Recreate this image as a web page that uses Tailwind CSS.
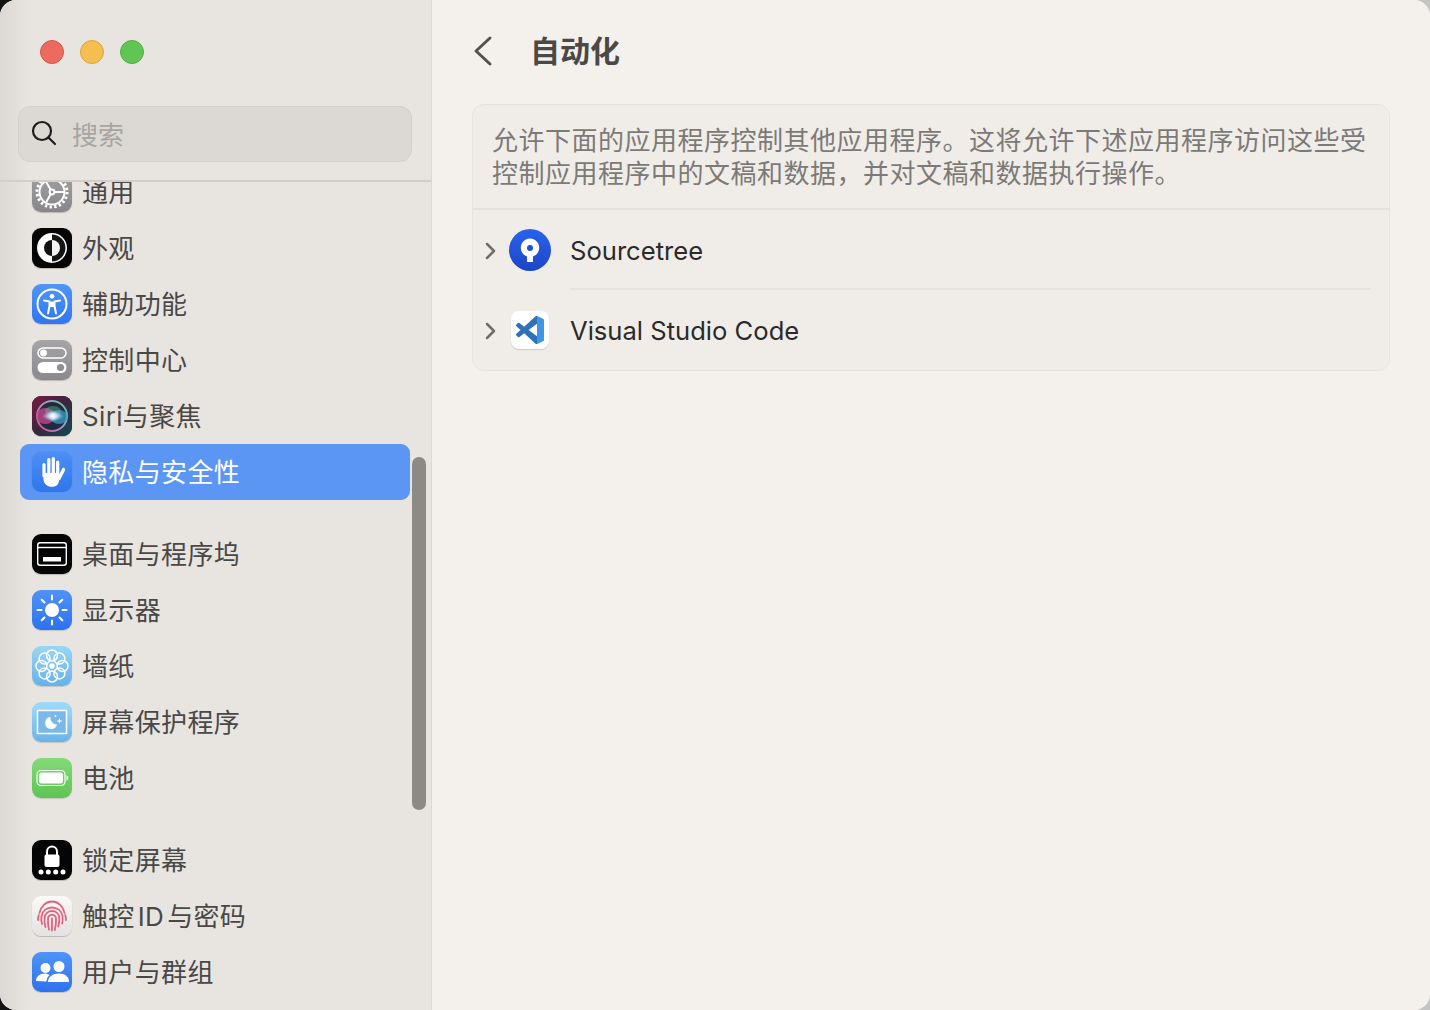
<!DOCTYPE html>
<html lang="zh-CN">
<head>
    <meta charset="UTF-8">
    <meta name="viewport" content="width=device-width, initial-scale=1.0">
    <title>自动化</title>
    <script src="https://cdn.jsdelivr.net/npm/@tailwindcss/browser@4"></script>
</head>
<body class="bg-linear-to-r from-[#141414] from-50% to-[#c4c4c4] to-50% font-['Inter','Noto_Sans_CJK_SC',sans-serif] overflow-hidden">
    <div class="w-[1430px] h-[1010px] flex rounded-[16px] overflow-hidden bg-[#f4f1ed]">

        <!-- sidebar -->
        <aside class="w-[432px] h-full shrink-0 flex flex-col bg-linear-to-r from-[#dcd9d5] via-[#e8e5e1] via-[7%] to-[#e8e5e1] border-r border-[#dcd9d5] relative">
            <div class="h-[182px] shrink-0 flex flex-col border-b-2 border-[#d2cfcb] relative z-10">
                <div class="flex gap-4 pl-10 pt-10">
                    <span class="w-6 h-6 rounded-full bg-[#ec6a5e] border border-[#d5574c]"></span>
                    <span class="w-6 h-6 rounded-full bg-[#f4bf4f] border border-[#dca53c]"></span>
                    <span class="w-6 h-6 rounded-full bg-[#61c554] border border-[#4eae43]"></span>
                </div>
                <div class="ml-[18px] mt-[42px] w-[394px] h-[56px] rounded-[12px] bg-[#dcd9d5] border border-[#d3d0cc] flex items-center pl-[11px] gap-[14px]">
                    <svg class="w-7 h-7 -mt-[2px]" viewBox="0 0 28 28" fill="none" stroke="#1e1e1e" stroke-width="2.2" stroke-linecap="round"><circle cx="12" cy="12" r="9"/><path d="M18.5 18.5 25 25"/></svg>
                    <span class="pt-1 text-[26px] leading-none text-[#a8a5a1]">搜索</span>
                </div>
            </div>

            <div class="flex-1 overflow-hidden">
                <ul class="-mt-[18px] pl-5 text-[26px] text-[#4a4846] leading-none tracking-[0.35px]">
                    <li class="h-14 flex items-center pl-3 gap-[10px]">
                        <div class="w-10 h-10 rounded-[9px] bg-linear-to-b from-[#a3a3a6] to-[#86868a] shadow-[0_1px_1px_rgba(0,0,0,.2)]">
                            <svg viewBox="0 0 40 40" fill="none" stroke="#fff" stroke-width="2"><circle cx="20" cy="20" r="12.5"/><circle cx="20" cy="20" r="15" stroke-width="3" stroke-dasharray="2.4 2.3"/><circle cx="20" cy="20" r="2.4"/><path d="M22.3 20H32M18.8 18 14 9.6M18.8 22 14 30.4"/></svg>
                        </div>
                        <span class="pt-[2px]">通用</span>
                    </li>
                    <li class="h-14 flex items-center pl-3 gap-[10px]">
                        <div class="w-10 h-10 rounded-[9px] bg-[#050505] shadow-[0_1px_1px_rgba(0,0,0,.2)]">
                            <svg viewBox="0 0 40 40"><circle cx="20" cy="20" r="15" fill="#fff"/><path d="M20 6.500a13.500 13.500 0 0 1 0 27z" fill="#141414"/><path d="M20 12a8 8 0 0 0 0 16z" fill="#111"/><path d="M20 12a8 8 0 0 1 0 16z" fill="#f2f2f2"/></svg>
                        </div>
                        <span class="pt-[2px]">外观</span>
                    </li>
                    <li class="h-14 flex items-center pl-3 gap-[10px]">
                        <div class="w-10 h-10 rounded-[9px] bg-linear-to-b from-[#4f96f8] to-[#2f76f0] shadow-[0_1px_1px_rgba(0,0,0,.15)]">
                            <svg viewBox="0 0 40 40" fill="none" stroke="#fff"><circle cx="20" cy="20" r="14.5" stroke-width="2"/><circle cx="20" cy="12.3" r="2.4" fill="#fff" stroke="none"/><path d="M12 16.500 17.500 17.600V22L16 29.500M28 16.500 22.500 17.600V22L24 29.500" stroke-width="2" stroke-linecap="round" stroke-linejoin="round"/><path d="M17.500 17.600h5V23h-5z" fill="#fff" stroke="none"/></svg>
                        </div>
                        <span class="pt-[2px]">辅助功能</span>
                    </li>
                    <li class="h-14 flex items-center pl-3 gap-[10px]">
                        <div class="w-10 h-10 rounded-[9px] bg-linear-to-b from-[#a5a5a8] to-[#8a8a8e] shadow-[0_1px_1px_rgba(0,0,0,.2)]">
                            <svg viewBox="0 0 40 40"><rect x="6" y="8" width="28" height="10" rx="5" fill="none" stroke="#fff" stroke-width="1.6"/><circle cx="11.5" cy="13" r="3.4" fill="#fff"/><rect x="5.5" y="22" width="29" height="11" rx="5.5" fill="#fff"/><circle cx="28.5" cy="27.5" r="3.6" fill="#8f8f93"/></svg>
                        </div>
                        <span class="pt-[2px]">控制中心</span>
                    </li>
                    <li class="h-14 flex items-center pl-3 gap-[10px]">
                        <div class="w-10 h-10 rounded-[9px] overflow-hidden bg-[#1c1c28] shadow-[0_1px_1px_rgba(0,0,0,.2)]">
                            <svg viewBox="0 0 40 40">
                                <defs>
                                    <radialGradient id="siriCore"><stop offset="0" stop-color="#fff"/><stop offset=".3" stop-color="#e6f0ff"/><stop offset="1" stop-color="#9ab8f0" stop-opacity="0"/></radialGradient>
                                    <linearGradient id="siriBack" x1="0" y1="0" x2="1" y2="1"><stop offset="0" stop-color="#7a1a3e"/><stop offset=".5" stop-color="#3a2440"/><stop offset="1" stop-color="#0e4d52"/></linearGradient>
                                    <linearGradient id="siriRing" x1="0" y1="1" x2="1" y2="0"><stop offset="0" stop-color="#e0508a"/><stop offset=".5" stop-color="#b0a0d8"/><stop offset="1" stop-color="#5fd8a8"/></linearGradient>
                                </defs>
                                <rect width="40" height="40" fill="url(#siriBack)"/>
                                <circle cx="20" cy="20" r="16" fill="#1d2a3c" opacity=".7"/>
                                <circle cx="20" cy="20" r="15" fill="none" stroke="url(#siriRing)" stroke-width="2" opacity=".9"/>
                                <ellipse cx="13.500" cy="20" rx="9.500" ry="8" fill="#c84a8c" opacity=".75"/>
                                <ellipse cx="27" cy="21" rx="8.500" ry="7" fill="#3a9fc8" opacity=".75"/>
                                <ellipse cx="21" cy="15" rx="8" ry="5" fill="#58c8a0" opacity=".4"/>
                                <ellipse cx="21" cy="20" rx="11" ry="5" fill="url(#siriCore)"/>
                                <circle cx="21" cy="20" r="6" fill="url(#siriCore)"/>
                            </svg>
                        </div>
                        <span class="pt-[2px]">Siri与聚焦</span>
                    </li>
                    <li class="h-14 w-[390px] flex items-center pl-3 gap-[10px] rounded-[9px] bg-[#5b96f5] text-white">
                        <div class="w-10 h-10 rounded-[9px] bg-linear-to-b from-[#4b8ff5] to-[#2f76ec] shadow-[0_0_1px_rgba(0,0,0,.25)]">
                            <svg viewBox="0 0 40 40" fill="#fff" stroke="#fff" stroke-linecap="round" stroke-width="3.200"><path d="M12 24V12.500M16.800 22V7.500M21.300 22V6.500M25.700 23V10" fill="none"/><path d="M31.500 17.500 27 26.500" fill="none" stroke-width="3.400"/><path d="M11.500 21H27V28C27 32 24.500 34.800 20 34.800 15 34.800 11.500 31.500 11.500 27z" stroke="none"/></svg>
                        </div>
                        <span class="pt-[2px]">隐私与安全性</span>
                    </li>

                    <li class="h-14 mt-[26px] flex items-center pl-3 gap-[10px]">
                        <div class="w-10 h-10 rounded-[9px] bg-[#050505] shadow-[0_1px_1px_rgba(0,0,0,.2)]">
                            <svg viewBox="0 0 40 40" fill="none" stroke="#fff" stroke-width="1.4"><rect x="5.700" y="8.700" width="28.600" height="22.600" rx="2.500"/><path d="M5.700 13.500H34.300"/><rect x="11" y="23" width="18" height="4.500" fill="#fff" stroke="none"/></svg>
                        </div>
                        <span class="pt-[2px]">桌面与程序坞</span>
                    </li>
                    <li class="h-14 flex items-center pl-3 gap-[10px]">
                        <div class="w-10 h-10 rounded-[9px] bg-linear-to-b from-[#4f93f8] to-[#2d72ee] shadow-[0_1px_1px_rgba(0,0,0,.15)]">
                            <svg viewBox="0 0 40 40" fill="#fff" stroke="#fff" stroke-width="2" stroke-linecap="round"><circle cx="20" cy="20" r="7" stroke="none"/><path d="M20 5.500v4M20 30.500v4M5.500 20h4M30.500 20h4M9.700 9.700l2.800 2.800M27.500 27.500l2.800 2.800M9.700 30.300l2.800-2.800M27.500 12.500l2.800-2.800"/></svg>
                        </div>
                        <span class="pt-[2px]">显示器</span>
                    </li>
                    <li class="h-14 flex items-center pl-3 gap-[10px]">
                        <div class="w-10 h-10 rounded-[9px] bg-linear-to-b from-[#9ad5f7] to-[#64b2ea] shadow-[0_1px_1px_rgba(0,0,0,.15)]">
                            <svg viewBox="0 0 40 40" fill="none" stroke="#fff" stroke-width="1.500"><circle cx="20" cy="9.500" r="5.500"/><circle cx="20" cy="30.500" r="5.500"/><circle cx="9.500" cy="20" r="5.500"/><circle cx="30.500" cy="20" r="5.500"/><circle cx="12.600" cy="12.600" r="5.500"/><circle cx="27.400" cy="12.600" r="5.500"/><circle cx="12.600" cy="27.400" r="5.500"/><circle cx="27.400" cy="27.400" r="5.500"/><circle cx="20" cy="20" r="2" fill="#fff"/></svg>
                        </div>
                        <span class="pt-[2px]">墙纸</span>
                    </li>
                    <li class="h-14 flex items-center pl-3 gap-[10px]">
                        <div class="w-10 h-10 rounded-[9px] bg-linear-to-b from-[#a0dcfa] to-[#68b4ea] shadow-[0_1px_1px_rgba(0,0,0,.15)]">
                            <svg viewBox="0 0 40 40"><rect x="5.500" y="8.500" width="29" height="23" fill="#7ab8e8" stroke="#fff" stroke-width="1.500"/><path d="M18.500 15a6 6 0 1 0 6.500 7.500 6.500 6.500 0 0 1-6.500-7.500z" fill="#fff"/><path d="M27.500 16l.7 2.300 2.300.7-2.300.7-.7 2.300-.7-2.300-2.300-.7 2.300-.7zM23.500 12.500l.4 1.100 1.100.4-1.100.4-.4 1.100-.4-1.100-1.100-.4 1.100-.4z" fill="#fff"/></svg>
                        </div>
                        <span class="pt-[2px]">屏幕保护程序</span>
                    </li>
                    <li class="h-14 flex items-center pl-3 gap-[10px]">
                        <div class="w-10 h-10 rounded-[9px] bg-linear-to-b from-[#83da78] to-[#5cc652] shadow-[0_1px_1px_rgba(0,0,0,.15)]">
                            <svg viewBox="0 0 40 40"><rect x="5" y="12.500" width="28" height="15" rx="4" fill="none" stroke="#fff" stroke-width="1.200"/><rect x="7" y="14.500" width="24" height="11" rx="2.500" fill="#fff"/><path d="M34.500 17.500c1.300.3 1.800 1.300 1.800 2.500s-.5 2.200-1.800 2.500z" fill="#fff"/></svg>
                        </div>
                        <span class="pt-[2px]">电池</span>
                    </li>

                    <li class="h-14 mt-[26px] flex items-center pl-3 gap-[10px]">
                        <div class="w-10 h-10 rounded-[9px] bg-[#050505] shadow-[0_1px_1px_rgba(0,0,0,.2)]">
                            <svg viewBox="0 0 40 40" fill="#fff"><path d="M15 15v-3.500a5 5 0 0 1 10 0V15" fill="none" stroke="#fff" stroke-width="2"/><rect x="12.500" y="14.500" width="15" height="12.500" rx="2"/><circle cx="9" cy="32" r="2.500"/><circle cx="16.300" cy="32" r="2.500"/><circle cx="23.700" cy="32" r="2.500"/><circle cx="31" cy="32" r="2.500"/></svg>
                        </div>
                        <span class="pt-[2px]">锁定屏幕</span>
                    </li>
                    <li class="h-14 flex items-center pl-3 gap-[10px]">
                        <div class="w-10 h-10 rounded-[9px] bg-linear-to-b from-[#fafafa] to-[#e2e2e2] shadow-[0_1px_1px_rgba(0,0,0,.2)]">
                            <svg viewBox="0 0 40 40" fill="none" stroke="#e4627c" stroke-width="1.800" stroke-linecap="round"><path d="M7.500 17C9 10 14 5.500 20 5.500S31 10 32.500 17"/><path d="M6 24c0-2 .2-3.500.8-5M34 24c0-2-.2-3.500-.8-5"/><path d="M10 28c-.7-2.500-1-5-.5-8 .9-5 5-8.500 10.500-8.500S29.600 15 30.500 20c.4 2.500.2 5-.3 7.500"/><path d="M13.500 31c-.8-3-1.300-6-.9-9.500.5-3.700 3.500-6.500 7.400-6.500s6.900 2.800 7.300 6.500c.3 3-.2 6-1 9"/><path d="M17 33.500c-.8-3.500-1.300-7-1-11 .2-2.200 1.800-3.700 4-3.700s3.800 1.500 4 3.700c.3 4-.2 7.500-1.200 11.500"/><path d="M20 22.500c0 4 0 8-.2 12"/></svg>
                        </div>
                        <span class="pt-[2px]">触控<span class="mx-[3px]">ID</span>与密码</span>
                    </li>
                    <li class="h-14 flex items-center pl-3 gap-[10px]">
                        <div class="w-10 h-10 rounded-[9px] bg-linear-to-b from-[#4f93f8] to-[#2d72ee] shadow-[0_1px_1px_rgba(0,0,0,.15)]">
                            <svg viewBox="0 0 40 40" fill="#fff"><circle cx="13.500" cy="16" r="5"/><circle cx="27" cy="14.500" r="5.500"/><path d="M4 29c0-4.500 4-7.500 8.500-7.500 2 0 3.500.5 5 1.500-2 1.800-3 4-3 6.500z"/><path d="M16 30c0-5.500 5-8.500 11-8.500s10 3 10 8.500z"/></svg>
                        </div>
                        <span class="pt-[2px]">用户与群组</span>
                    </li>
                </ul>
            </div>

            <!-- overlay scrollbar -->
            <div class="absolute left-[412px] top-[457px] w-[14px] h-[353px] rounded-full bg-[#8c8a87]"></div>
        </aside>

        <!-- detail pane -->
        <main class="flex-1 h-full bg-[#f4f1ed] pl-10 pr-10">
            <header class="h-[104px] flex items-center pb-[2px]">
                <svg class="w-[22px] h-8" viewBox="0 0 22 32" fill="none" stroke="#55534f" stroke-width="3" stroke-linecap="round" stroke-linejoin="round"><path d="M18 3 4 16l14 13"/></svg>
                <h1 class="ml-[36px] text-[30px] font-bold text-[#4b4946] leading-none">自动化</h1>
            </header>

            <section class="w-[918px] h-[267px] rounded-[12px] border border-[#e6e3df] bg-[#f0ede9]">
                <p class="h-[105px] border-b-2 border-[#e4e1dd] pl-[19px] pr-4 pt-[19px] text-[26px] leading-[33px] tracking-[0.5px] text-[#7c7a77]">允许下面的应用程序控制其他应用程序。这将允许下述应用程序访问这些受控制应用程序中的文稿和数据，并对文稿和数据执行操作。</p>

                <div class="h-[80px] flex items-center pl-[11px] relative">
                    <svg class="w-3 h-[18px] mt-[2px] ml-[1px]" viewBox="0 0 12 18" fill="none" stroke="#706e6b" stroke-width="2.500" stroke-linecap="round" stroke-linejoin="round"><path d="M2 2l7 7-7 7"/></svg>
                    <svg class="w-[42px] h-[42px] ml-[12px]" viewBox="0 0 42 42">
                        <defs><linearGradient id="stBlue" x1="0" y1="0" x2="0" y2="1"><stop offset="0" stop-color="#2a62ee"/><stop offset="1" stop-color="#1c46c4"/></linearGradient></defs>
                        <circle cx="21" cy="21" r="21" fill="url(#stBlue)"/>
                        <path d="M18 33V27.500a9.200 9.200 0 1 1 6 0V33z" fill="#fff"/>
                        <circle cx="21" cy="19" r="3" fill="#1f50d0"/>
                    </svg>
                    <span class="ml-[19px] pt-[1px] text-[25.6px] leading-none text-[#2b2a29]">Sourcetree</span>
                    <div class="absolute left-[97px] right-[18px] bottom-0 h-[2px] bg-[#e6e3df]"></div>
                </div>

                <div class="h-[80px] flex items-center pl-[11px]">
                    <svg class="w-3 h-[18px] mt-[2px] ml-[1px]" viewBox="0 0 12 18" fill="none" stroke="#706e6b" stroke-width="2.500" stroke-linecap="round" stroke-linejoin="round"><path d="M2 2l7 7-7 7"/></svg>
                    <div class="w-[38px] h-[38px] ml-[14px] rounded-[8px] bg-white shadow-[0_1px_1px_rgba(0,0,0,.15)] flex items-center justify-center">
                        <svg class="w-7 h-7" viewBox="0 0 24 24">
                            <path d="M23.150 2.587 18.210.21a1.494 1.494 0 0 0-1.705.29l-9.460 8.630-4.120-3.128a.999.999 0 0 0-1.276.057L.327 7.261A1 1 0 0 0 .326 8.740L3.899 12 .326 15.260a1 1 0 0 0 .001 1.479L1.650 17.940a.999.999 0 0 0 1.276.057l4.120-3.128 9.460 8.630a1.492 1.492 0 0 0 1.704.29l4.942-2.377A1.500 1.500 0 0 0 24 20.060V3.939a1.500 1.500 0 0 0-.850-1.352zm-5.146 14.861L10.826 12l7.178-5.448v10.896z" fill="#2f72b8"/>
                            <path d="M18.004 24V0c.070 0 .140.060.206.210l4.940 2.377A1.500 1.500 0 0 1 24 3.939V20.060a1.500 1.500 0 0 1-.850 1.352l-4.940 2.377a.500.500 0 0 1-.206.211z" fill="#3f96e6"/>
                        </svg>
                    </div>
                    <span class="ml-[21px] pt-[1px] text-[25.6px] leading-none text-[#2b2a29]">Visual Studio Code</span>
                </div>
            </section>
        </main>
    </div>
</body>
</html>
